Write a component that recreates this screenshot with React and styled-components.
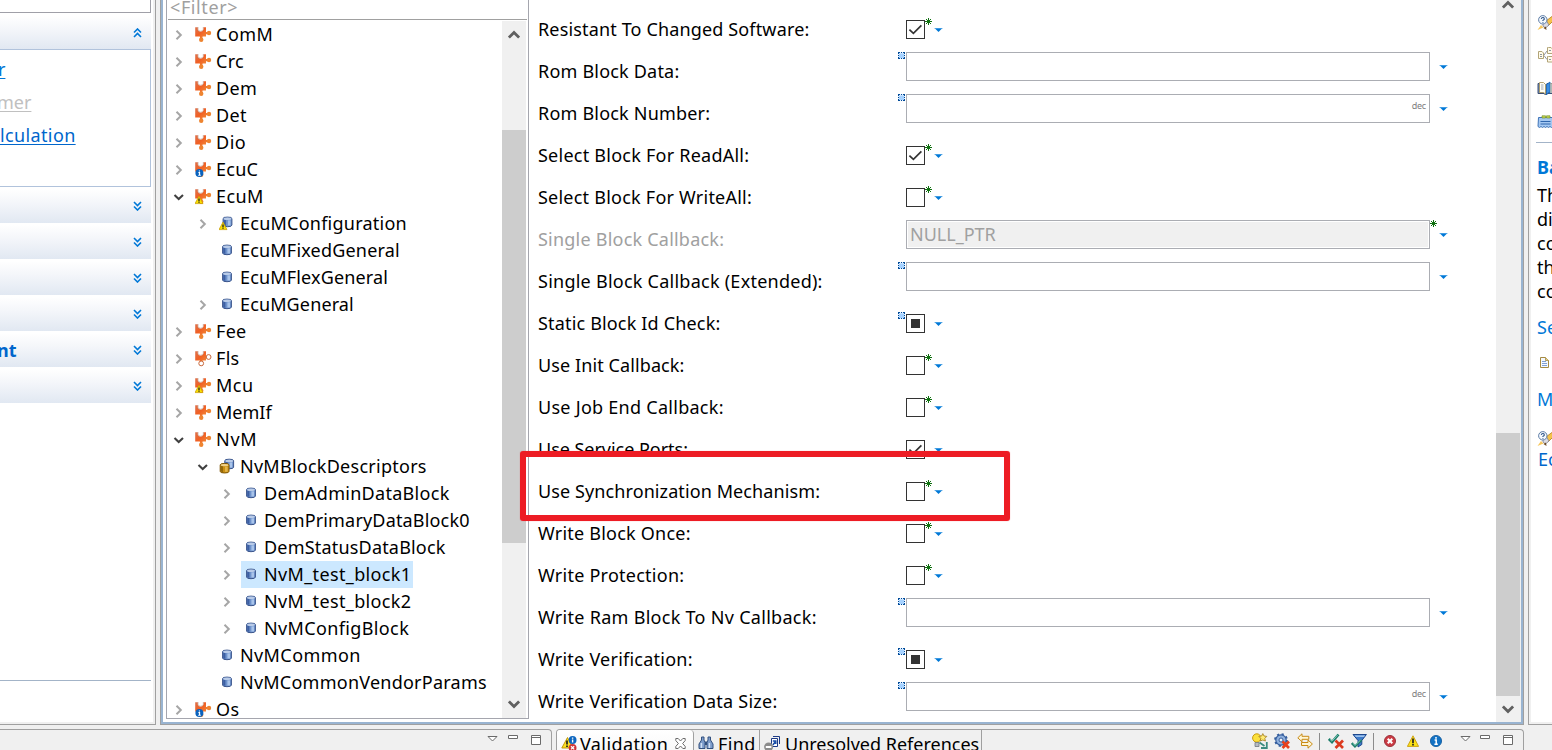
import React from "react";
import styled, { createGlobalStyle, css } from "styled-components";

const Global = createGlobalStyle`
  * { box-sizing: border-box; }
  body {
    margin: 0;
    background: #f0f0f0;
    color: #000;
    font: 18px/27px "Noto Sans", "Open Sans", sans-serif;
    overflow: hidden;
  }
  svg { display: block; flex: none; }
`;

/* ---------- shell ---------- */

const Window = styled.div`
  width: 1552px;
  height: 750px;
  overflow: hidden;
  display: flex;
  flex-direction: column;
  gap: 4px;
`;

const Workbench = styled.div`
  height: 725px;
  display: flex;
`;

const Text = styled.span`
  white-space: pre;
  letter-spacing: ${(p) => p.$track || 0}px;
`;

/* ---------- task pane on the left ---------- */

const TaskPane = styled.div`
  width: 156px;
  height: 725px;
  margin-right: 4px;
  border-right: 1px solid #a0a0a0;
  border-bottom: 1px solid #a0a0a0;
  padding: 0 2px 2px 0;
`;

const TaskBody = styled.div`
  height: 100%;
  background: #fff;
  padding-right: 2px;
`;

const TaskTop = styled.div`
  height: 13px;
  border: solid #a0a0a8;
  border-width: 0 1px 1px 0;
  margin-bottom: 3px;
`;

const SectionHead = styled.div`
  height: ${(p) => (p.$open ? 33 : 34)}px;
  margin-bottom: ${(p) => (p.$open ? 0 : 2)}px;
  background: linear-gradient(#fff, #f4f6fa 40%, #e1e8f2);
  display: flex;
  align-items: center;
  justify-content: space-between;
  padding-right: 9px;
  font-weight: 700;
  color: #0066cc;
  > span { margin-left: -3px; }
`;

const SectionBox = styled.div`
  height: 138px;
  margin-bottom: 2px;
  border: solid #b1c3dc;
  border-width: 1px 1px 1px 0;
  padding-top: 3px;
  display: flex;
  flex-direction: column;
`;

const TaskLink = styled.span`
  height: 33px;
  line-height: 33px;
  align-self: flex-start;
  white-space: pre;
  margin-left: ${(p) => p.$shift || 0}px;
  letter-spacing: ${(p) => p.$track || 0}px;
  color: ${(p) => (p.$off ? "#c0c0c0" : p.$hot ? "#0078d7" : "#0066cc")};
  text-decoration: underline;
  text-decoration-thickness: 1px;
  text-underline-offset: 2px;
`;

const TaskRule = styled.div`
  height: 1px;
  margin-top: 277px;
  background: #a3b4c8;
`;

/* ---------- editor ---------- */

const Editor = styled.div`
  width: 1364px;
  height: 725px;
  border: solid #a0a0a0;
  border-width: 0 1px 1px 1px;
  display: flex;
`;

const EditorInner = styled.div`
  flex: 1;
  border: solid #99b4d1;
  border-width: 0 2px 2px 2px;
  background: #fff;
  padding-left: 3px;
  display: flex;
`;

const TreePane = styled.div`
  width: 363px;
  height: 719px;
  border: solid #a5a6ae;
  border-width: 0 1px 1px 1px;
  display: flex;
  flex-direction: column;
`;

const Filter = styled.div`
  height: 20px;
  margin: 0 1px 1px;
  border-bottom: 1px solid #a0a0a0;
  color: #a0a0a0;
  padding-left: 2px;
  display: flex;
  align-items: flex-end;
  line-height: 24px;
  overflow: hidden;
`;

const TreeBody = styled.div`
  flex: 1;
  min-height: 0;
  display: flex;
  justify-content: space-between;
  padding-right: 2px;
`;

const TreeRows = styled.div`
  overflow: hidden;
  flex: 1;
`;

const TreeRow = styled.div`
  height: 27px;
  padding-left: ${(p) => 4 + p.$depth * 24}px;
  display: flex;
  align-items: center;
`;

const Twisty = styled.div`
  width: 16px;
  height: 16px;
  margin-right: 6px;
  flex: none;
`;

const TreeItem = styled.div`
  height: 27px;
  display: flex;
  align-items: center;
  gap: 4px;
  padding: 0 2px 0 2px;
  background: ${(p) => (p.$selected ? "#cce8ff" : "transparent")};
`;

const ScrollTrack = styled.div`
  width: ${(p) => p.$w}px;
  background: #f0f0f0;
  display: flex;
  flex-direction: column;
  align-items: center;
  justify-content: space-between;
  padding: ${(p) => p.$pad};
  flex: none;
`;

const ScrollThumb = styled.div`
  align-self: stretch;
  height: ${(p) => p.$h}px;
  margin: ${(p) => p.$m};
  background: #cdcdcd;
`;

const FormPane = styled.div`
  flex: 1;
  padding: 9px 0 0 9px;
  height: 722px;
  overflow: hidden;
`;

const FormRow = styled.div`
  height: 42px;
  display: flex;
  align-items: flex-start;
`;

const FormLabel = styled.div`
  width: 368px;
  line-height: 40px;
  white-space: pre;
  letter-spacing: ${(p) => p.$track || 0}px;
  color: ${(p) => (p.$off ? "#a0a0a0" : "#000")};
`;

const FieldSlot = styled.div`
  position: relative;
  margin-top: ${(p) => (p.$check ? 11 : 1)}px;
  display: flex;
  align-items: flex-start;
`;

const CheckBox = styled.div`
  width: 19px;
  height: 19px;
  border: 1px solid #333;
  background: #fff;
  display: flex;
  align-items: center;
  justify-content: center;
`;

const Mixed = styled.div`
  width: 9px;
  height: 9px;
  background: #333;
`;

const Input = styled.div`
  width: 524px;
  height: 29px;
  border: 1px solid #abadb3;
  background: ${(p) => (p.$off ? "#f0f0f0" : "#fff")};
  ${(p) => p.$off && css`box-shadow: inset 0 0 0 1px #fff;`}
  color: #a0a0a0;
  padding: 0 3px;
  display: flex;
  justify-content: ${(p) => (p.$unit ? "flex-end" : "flex-start")};
`;

const Unit = styled.span`
  font-size: 9px;
  line-height: 22px;
  letter-spacing: -0.2px;
  color: #7d7d7d;
`;

const Menu = styled.div`
  margin: ${(p) => (p.$check ? "8px 0 0 9px" : "13px 0 0 9px")};
`;

const SetMark = styled.div`
  position: absolute;
  left: -8px;
  top: ${(p) => (p.$check ? -2 : 0)}px;
`;

const StarMark = styled.div`
  position: absolute;
  left: ${(p) => (p.$check ? 19 : 524)}px;
  top: ${(p) => (p.$check ? -2 : 0)}px;
`;

const Highlight = styled.div`
  position: absolute;
  left: 520px;
  top: 451px;
  width: 490px;
  height: 70px;
  border: 6px solid #ed1c24;
  border-radius: 3px;
  box-shadow: 0 0 1px rgba(237, 28, 36, 0.6);
`;

/* ---------- help pane on the right ---------- */

const HelpPane = styled.div`
  width: 24px;
  margin-left: 4px;
  border-left: 1px solid #a0a0a0;
  border-bottom: 1px solid #a0a0a0;
  padding-left: 2px;
  overflow: hidden;
`;

const HelpBody = styled.div`
  height: 722px;
  background: #fff;
  padding: 15px 0 0 6px;
  white-space: pre;
  line-height: 24px;
`;

const HelpIcon = styled.div`
  height: ${(p) => p.$h}px;
  padding-left: ${(p) => p.$pl || 0}px;
`;

const HelpRule = styled.div`
  height: 1px;
  margin: 0 0 11px -1px;
  background: #a3b4c8;
`;

const HelpTitle = styled.div`
  font-weight: 700;
  color: #0078d7;
  line-height: 26px;
  margin-bottom: 3px;
`;

const HelpLink = styled.div`
  color: ${(p) => (p.$dark ? "#0066cc" : "#0078d7")};
  padding-left: ${(p) => (p.$dark ? 1 : 0)}px;
  margin: ${(p) => p.$m};
`;

/* ---------- bottom views ---------- */

const BottomBar = styled.div`
  height: 21px;
  display: flex;
  gap: 4px;
`;

const View = styled.div`
  width: ${(p) => p.$w}px;
  border: 1px solid #a0a0a0;
  border-width: ${(p) => (p.$first ? "1px 1px 0 0" : "1px 1px 0 1px")};
  border-radius: ${(p) => (p.$first ? "0 4px 0 0" : "4px 4px 0 0")};
  display: flex;
  justify-content: ${(p) => (p.$first ? "flex-end" : "space-between")};
  overflow: hidden;
`;

const Tabs = styled.div`
  display: flex;
`;

const Tab = styled.div`
  height: 27px;
  width: ${(p) => p.$w}px;
  padding: 0 0 0 4px;
  border-right: 1px solid #a0a0a0;
  border-top-right-radius: ${(p) => (p.$active ? 4 : 0)}px;
  background: ${(p) => (p.$active ? "linear-gradient(#fff, #f6f6f6)" : "transparent")};
  display: flex;
  align-items: flex-start;
  gap: ${(p) => (p.$active ? 3 : 4)}px;
  > svg { margin-top: 6px; }
  > span { line-height: 28px; }
`;

const Tools = styled.div`
  display: flex;
  align-items: flex-start;
  padding: 3px 10px 0 0;
`;

const Tool = styled.div`
  margin-left: ${(p) => p.$ml || 0}px;
  margin-top: ${(p) => p.$mt || 0}px;
`;

const ToolRule = styled.div`
  width: 1px;
  height: 20px;
  margin: 0 0 0 ${(p) => p.$ml}px;
  background: #8c8c8c;
`;

const ViewTools = styled.div`
  display: flex;
  align-items: flex-start;
  padding: 5px ${(p) => p.$pr}px 0 0;
`;

/* ---------- drawings ---------- */

const SectionChevron = ({ up }) => (
  <svg width="9" height="10" viewBox="0 0 9 10" fill="none" stroke="#0078d7" strokeWidth="1.6">
    {up ? <path d="M1 4.5 4.5 1 8 4.5M1 9 4.5 5.5 8 9" /> : <path d="M1 1 4.5 4.5 8 1M1 5.5 4.5 9 8 5.5" />}
  </svg>
);

const TwistyIcon = ({ open }) => (
  <svg width="16" height="16" viewBox="0 0 16 16" fill="none">
    {open ? (
      <path d="M3.5 6 7.7 10 12 6" stroke="#404040" strokeWidth="2.1" />
    ) : (
      <path d="M5.5 3.8 9.8 8 5.5 12.2" stroke="#a6a6a6" strokeWidth="2" />
    )}
  </svg>
);

const ScrollChevron = ({ up }) => (
  <svg width="12" height="9" viewBox="0 0 12 9" fill="none" stroke="#606060" strokeWidth="2.8">
    <path d={up ? "M.9 7.6 6 2.4 11.1 7.6" : "M.9 1.4 6 6.6 11.1 1.4"} />
  </svg>
);

const WarnBadge = ({ x, y }) => (
  <g transform={`translate(${x} ${y})`}>
    <path d="M4 .5 8 8H0Z" fill="#fae000" stroke="#c79a00" strokeWidth=".7" />
    <path d="M4 2.8V5.4M4 6V7.2" stroke="#222" strokeWidth="1.3" />
  </g>
);

const InfoBadge = ({ x, y }) => (
  <g transform={`translate(${x} ${y})`}>
    <circle cx="4" cy="4" r="4" fill="#0a62bd" />
    <path d="M4 1.4V2.6M3 3.6H4.2V6.2M2.8 6.3H5.4" stroke="#fff" strokeWidth="1.1" fill="none" />
  </g>
);

const ModuleIcon = ({ badge, hollow }) => (
  <svg width="17" height="17" viewBox="0 0 17 17">
    <defs>
      <linearGradient id="mod" x1="0" y1="0" x2="1" y2="1">
        <stop offset="0" stopColor="#dd7450" />
        <stop offset=".45" stopColor="#f05f24" />
        <stop offset="1" stopColor="#f3923a" />
      </linearGradient>
    </defs>
    <path
      d="M.2 1.3H3V3.6Q3.2 5.6 5.6 5.6T8.3 3.6V1.3H11V6H12.6V8.2H11V10.6H7.6L7.3 12.6H5.2L4.8 10.6H.2Z"
      fill="url(#mod)"
    />
    <path d="M3 1V3.4Q3.2 5.2 5.6 5.2T8.3 3.4V1" fill="none" stroke="#c9b0a4" strokeWidth=".8" />
    {hollow ? (
      <g fill="#fff" stroke="#c8683c" strokeWidth="1">
        <circle cx="13.6" cy="7" r="2.4" />
        <circle cx="6.2" cy="13.4" r="2.4" />
      </g>
    ) : (
      <g fill="#ee8430">
        <circle cx="14" cy="7" r="2.2" />
        <circle cx="6.2" cy="13.8" r="2.2" />
      </g>
    )}
    {badge === "warn" && <WarnBadge x={0} y={7.6} />}
    {badge === "info" && <InfoBadge x={0.4} y={8} />}
  </svg>
);

const Can = ({ x, y, gold }) => (
  <g transform={`translate(${x} ${y})`}>
    <path
      d="M.6 2Q.6 .6 5 .6T9.4 2V8.6Q9.4 10.2 5 10.2T.6 8.6Z"
      fill={gold ? "#c98f12" : "#6f93cc"}
      stroke={gold ? "#7d5608" : "#3c568c"}
      strokeWidth="1"
    />
    <path d="M1.2 3V8.8L3.4 9.5V3.5Z" fill={gold ? "#94680a" : "#3d5fa3"} />
    <path d="M5.4 3.8H8V9H5.4Z" fill={gold ? "#e3b54a" : "#a9c4ea"} />
    <ellipse cx="5" cy="2.3" rx="3.9" ry="1.2" fill={gold ? "#efd08a" : "#b9cbe8"} />
  </g>
);

const BlockIcon = ({ badge }) => (
  <svg width="17" height="17" viewBox="0 0 17 17">
    <Can x={badge ? 3.5 : 3} y={badge ? 1.5 : 2.5} />
    {badge === "warn" && <WarnBadge x={0} y={6.6} />}
  </svg>
);

const BlocksIcon = () => (
  <svg width="17" height="17" viewBox="0 0 17 17">
    <Can x={5.2} y={0.6} />
    <Can x={0.6} y={4.8} gold />
  </svg>
);

const MenuArrow = () => (
  <svg width="9" height="4" viewBox="0 0 9 4">
    <path d="M0 0H9L8 1H1Z" fill="#7cbcec" />
    <path d="M1 .5H8L4.5 4Z" fill="#0078d7" />
  </svg>
);

const CheckMark = () => (
  <svg width="15" height="13" viewBox="0 0 15 13" fill="none" stroke="#333" strokeWidth="1.7">
    <path d="M1.4 6.6 5.4 10.4 13.4 2.4" />
  </svg>
);

const SetIcon = () => (
  <svg width="7" height="7" viewBox="0 0 7 7">
    <path d="M0 0H7V7H0Z" fill="#e6f2ff" />
    <path d="M1 1.5H6V6H1Z" fill="#a6d2ff" />
    <path
      d="M0 0H2V1H1V2H0ZM3 0H4V1H3ZM5 0H7V2H6V1H5ZM0 3H1V4H0ZM6 3H7V4H6ZM0 5H1V6H2V7H0ZM3 6H4V7H3ZM6 5H7V7H5V6H6Z"
      fill="#004a98"
    />
  </svg>
);

const StarIcon = () => (
  <svg width="7" height="7" viewBox="0 0 7 7" stroke="#107010" strokeWidth="1">
    <path d="M3.5 0V7M0 3.5H7M1 1 6 6M6 1 1 6" />
  </svg>
);

const RocketIcon = () => (
  <svg width="17" height="16" viewBox="0 0 17 16">
    <path d="M9 6 15.5 1H17V5L11 11Z" fill="#f6c24a" stroke="#b07a1c" strokeWidth=".8" />
    <path d="M6 8 9.5 6 12 10 8.5 13 6 11Z" fill="#dcdce4" stroke="#8a8a96" strokeWidth=".9" />
    <path d="M.5 15 4 10 6.5 12.5Z" fill="#f7c75c" />
    <path d="M6.5 13 9 11.5 9.5 15Z" fill="#6d4a22" />
    <circle cx="5.8" cy="4.8" r="4.2" fill="#f4f8fd" stroke="#5c7ca6" />
    <path d="M4.3 3.8Q4.5 2.4 6 2.5T7.2 4.4L5.9 5.4V6M5.9 6.9V7.8" fill="none" stroke="#2d5488" strokeWidth="1.1" />
  </svg>
);

const HierarchyIcon = () => (
  <svg width="17" height="16" viewBox="0 0 17 16" fill="#fffbe9" stroke="#b2a478" strokeWidth="1">
    <path d="M1.5 4.5H5L6.5 6V11.5H1.5ZM11.5 .5H14L15.5 2V6.5H10.5V.5ZM11.5 9.5H15.5V15H10.5V9.5Z" />
    <path d="M7 8 10 4M7 8.5 10 12.5M3 7.5H5M3 9.5H5M12 3.5H14M12 12.5H14" fill="none" stroke="#8f95a0" />
  </svg>
);

const BookIcon = () => (
  <svg width="17" height="16" viewBox="0 0 17 16">
    <path d="M1 2.5H7L8.5 4 10 2.5H16.5V12.5H10L8.5 14 7 12.5H1Z" fill="#6f8fb8" stroke="#3c4f74" />
    <path d="M2.5 1.5H6.5L8.5 3.5V13L6.5 11.5H2.5Z" fill="#fffdf3" stroke="#a99864" strokeWidth=".9" />
    <path d="M4 4H6.5M4 6H6.5M4 8H6.5" stroke="#9ca8ba" />
    <path d="M9.5 3.5 13 1V12L11.5 11.5 9.5 14Z" fill="#3b8de2" stroke="#1c62b0" strokeWidth=".8" />
    <path d="M14 2V12" stroke="#f4e7b8" />
  </svg>
);

const NotesIcon = () => (
  <svg width="17" height="14" viewBox="0 0 17 14">
    <path d="M1.5 2.5H16V11L14.5 12.5 13 11.5 11.5 12.5 10 11.5 8.5 12.5 7 11.5 5.5 12.5 4 11.5 2.5 12.5 1 11.5Z" fill="#a4c8f2" stroke="#3f74b8" strokeWidth="1" />
    <path d="M5 .8H8.5V3H5ZM9.5 .8H13V3H9.5Z" fill="#c6d844" stroke="#77913a" strokeWidth=".7" />
    <path d="M3.5 6.5H13.5M3.5 9H13.5" stroke="#2f66ad" />
  </svg>
);

const DocIcon = () => (
  <svg width="9" height="11" viewBox="0 0 9 11">
    <path d="M.5 .5H5.5L8.5 3.5V10.5H.5Z" fill="#f4f8ff" stroke="#a58a43" />
    <path d="M5.5 .5V3.5H8.5" fill="#e3cc86" stroke="#a58a43" strokeWidth=".8" />
    <path d="M2 4.5H6M2 6.5H7M2 8.5H7" stroke="#7f9fd2" />
  </svg>
);

const TriangleIcon = () => (
  <svg width="11" height="6" viewBox="0 0 11 6">
    <path d="M1 .5H10L5.5 5Z" fill="#fff" stroke="#6a6a6a" />
  </svg>
);

const MinIcon = () => (
  <svg width="10" height="4" viewBox="0 0 10 4">
    <path d="M.5 .5H9.5V3.5H.5Z" fill="#fff" stroke="#6a6a6a" />
  </svg>
);

const MaxIcon = () => (
  <svg width="10" height="10" viewBox="0 0 10 10">
    <path d="M.5 .5H9.5V9.5H.5ZM.5 2.5H9.5" fill="#fff" stroke="#6a6a6a" />
  </svg>
);

const ProblemsIcon = () => (
  <svg width="16" height="16" viewBox="0 0 16 16">
    <path d="M6.5 1.5 12 12H.8Z" fill="#fbdf22" stroke="#b98c00" strokeWidth=".9" />
    <path d="M6 4.5V8.5M6 9.5V11" stroke="#1d1d1d" strokeWidth="1.7" />
    <circle cx="11.6" cy="4" r="3.9" fill="#0d66bf" />
    <path d="M11.6 1.6V2.8M11.6 3.6V6.4" stroke="#fff" strokeWidth="1.4" />
    <circle cx="11.6" cy="11.8" r="3.9" fill="#cf3338" />
    <path d="M10 10.2 13.2 13.4M13.2 10.2 10 13.4" stroke="#fff" strokeWidth="1.3" />
  </svg>
);

const CloseIcon = () => (
  <svg width="11" height="11" viewBox="0 0 11 11">
    <path
      d="M.8 .5H3.2L5.5 3 7.8 .5H10.2V2.6L7.6 5.5 10.2 8.4V10.5H7.8L5.5 8 3.2 10.5H.8V8.4L3.4 5.5 .8 2.6Z"
      fill="#fff"
      stroke="#6c6c6c"
    />
  </svg>
);

const BinocularsIcon = () => (
  <svg width="16" height="15" viewBox="0 0 16 15">
    <path d="M3.5 1H6V4L7 6.5V12.5H1V8L3.5 4Z" fill="#7d9ccb" stroke="#33507f" />
    <path d="M10 1H12.5V4L15 8V12.5H9V6.5L10 4Z" fill="#7d9ccb" stroke="#33507f" />
    <path d="M7 5.5H9V9H7Z" fill="#33507f" />
    <path d="M3.4 7V12M11.4 7V12" stroke="#d2e0f4" strokeWidth="1.5" />
  </svg>
);

const ReferencesIcon = () => (
  <svg width="17" height="16" viewBox="0 0 17 16">
    <path d="M9 .5H15.5V8" fill="none" stroke="#1d3a86" />
    <path d="M7.5 2.5H13.5V10.5H7.5Z" fill="#fff" stroke="#1d3a86" />
    <path d="M8.8 9 11.5 5.5M8.8 5H11.8V8" fill="none" stroke="#1b4fa8" strokeWidth="1.5" />
    <circle cx="4.6" cy="11" r="4.5" fill="#8d8d8d" />
    <path d="M1.8 11H7.4" stroke="#fff" strokeWidth="1.8" />
  </svg>
);

const BulbIcon = () => (
  <svg width="16" height="16" viewBox="0 0 16 16">
    <circle cx="4.8" cy="5" r="4.2" fill="#fbe03c" stroke="#c89a10" />
    <path d="M3 9.5H7V13.5H3Z" fill="#b5bac2" stroke="#717780" strokeWidth=".8" />
    <path d="M10.8 .6 12 3 14.8 3.4 12.8 5.4 13.4 8 10.8 7 8.2 8 8.8 5.4 6.8 3.4 9.6 3Z" fill="#ffea72" stroke="#a8842a" strokeWidth=".9" />
    <path d="M7.5 9.5 12.5 13M14.8 9V15H9" fill="none" stroke="#3c8c80" strokeWidth="1.8" />
  </svg>
);

const GearIcon = () => (
  <svg width="16" height="16" viewBox="0 0 16 16">
    <circle cx="7" cy="7" r="5.2" fill="#8fb0dd" stroke="#345d9d" strokeWidth="1.2" />
    <circle cx="7" cy="7" r="6" fill="none" stroke="#345d9d" strokeWidth="1.8" strokeDasharray="2.2 2.5" />
    <circle cx="7" cy="7" r="2" fill="#f0f5fc" stroke="#345d9d" />
    <path d="M8.5 8.5 15 15M15 8.5 8.5 15" stroke="#e8401c" strokeWidth="2.7" />
  </svg>
);

const SwapIcon = () => (
  <svg width="16" height="16" viewBox="0 0 16 16" fill="#fff6d4" stroke="#c88a14" strokeWidth="1">
    <path d="M.8 4.8 5 .8V3.3H11.8V6.3H5V8.8Z" />
    <path d="M15.4 11 11 7V9.5H4.5V12.5H11V15.2Z" />
  </svg>
);

const CheckCrossIcon = () => (
  <svg width="16" height="16" viewBox="0 0 16 16" fill="none">
    <path d="M.8 6 4 9.2 10.5 1.5" stroke="#1b7c69" strokeWidth="2.6" />
    <path d="M2 6.4 4 8.2 9.8 1.8" stroke="#9fe0cf" strokeWidth=".8" />
    <path d="M7.5 7.5 15 15M15 7.5 7.5 15" stroke="#db3a1e" strokeWidth="2.7" />
  </svg>
);

const FilterIcon = () => (
  <svg width="16" height="16" viewBox="0 0 16 16">
    <path d="M2 1.5H15.4L10.8 7.5V11.5L7 14V7.5Z" fill="#3d7bca" stroke="#1d478c" />
    <path d="M3.5 2.4H14L13 3.8H4.8Z" fill="#bcd8f8" />
    <path d="M.8 10 4 13.4 10.5 7" fill="none" stroke="#1b7c69" strokeWidth="2.4" />
    <path d="M1.6 10 4 12.4 9.6 7" fill="none" stroke="#a9e8d6" strokeWidth=".8" />
  </svg>
);

const ErrorIcon = () => (
  <svg width="12" height="12" viewBox="0 0 12 12">
    <circle cx="6" cy="6" r="5.5" fill="#cc3b44" stroke="#99313a" />
    <path d="M3.7 3.7 8.3 8.3M8.3 3.7 3.7 8.3" stroke="#fff" strokeWidth="2" />
  </svg>
);

const WarningIcon = () => (
  <svg width="12" height="12" viewBox="0 0 12 12">
    <path d="M6 .8 11.6 11.4H.4Z" fill="#fbe116" stroke="#c99c0c" strokeWidth=".9" />
    <path d="M6 3.6V8M6 8.8V10.4" stroke="#222" strokeWidth="1.7" />
  </svg>
);

const InfoIcon = () => (
  <svg width="12" height="12" viewBox="0 0 12 12">
    <circle cx="6" cy="6" r="5.6" fill="#1272c4" stroke="#0c5599" strokeWidth=".8" />
    <path d="M6 2V3.8M4.6 5H6.2V9M4.4 9.2H7.8" fill="none" stroke="#fff" strokeWidth="1.5" />
  </svg>
);

/* ---------- data ---------- */

const tree = [
  { t: "ComM", d: 0, k: "mod", track: 0.5 },
  { t: "Crc", d: 0, k: "mod", track: 0.3 },
  { t: "Dem", d: 0, k: "mod", track: 0.3 },
  { t: "Det", d: 0, k: "mod", track: 0.3 },
  { t: "Dio", d: 0, k: "mod", track: 0.5 },
  { t: "EcuC", d: 0, k: "mod", badge: "info", track: 0.25 },
  { t: "EcuM", d: 0, k: "mod", badge: "warn", open: true, track: 0.4 },
  { t: "EcuMConfiguration", d: 1, k: "block", badge: "warn", track: 0.24 },
  { t: "EcuMFixedGeneral", d: 1, k: "block", leaf: true, track: 0.19 },
  { t: "EcuMFlexGeneral", d: 1, k: "block", leaf: true, track: 0.16 },
  { t: "EcuMGeneral", d: 1, k: "block", track: 0.13 },
  { t: "Fee", d: 0, k: "mod", track: 0.3 },
  { t: "Fls", d: 0, k: "mod", hollow: true, track: 0.3 },
  { t: "Mcu", d: 0, k: "mod", badge: "warn", track: 0.5 },
  { t: "MemIf", d: 0, k: "mod" },
  { t: "NvM", d: 0, k: "mod", open: true, track: 0.7 },
  { t: "NvMBlockDescriptors", d: 1, k: "blocks", open: true, track: 0.26 },
  { t: "DemAdminDataBlock", d: 2, k: "block", track: 0.29 },
  { t: "DemPrimaryDataBlock0", d: 2, k: "block", track: 0.17 },
  { t: "DemStatusDataBlock", d: 2, k: "block", track: 0.19 },
  { t: "NvM_test_block1", d: 2, k: "block", selected: true, track: 0.36 },
  { t: "NvM_test_block2", d: 2, k: "block", track: 0.36 },
  { t: "NvMConfigBlock", d: 2, k: "block", track: 0.37 },
  { t: "NvMCommon", d: 1, k: "block", leaf: true, track: 0.4 },
  { t: "NvMCommonVendorParams", d: 1, k: "block", leaf: true, track: 0.24 },
  { t: "Os", d: 0, k: "mod", badge: "info", track: 0.5 },
];

const fields = [
  { t: "Resistant To Changed Software:", check: "on", star: true, track: 0.15 },
  { t: "Rom Block Data:", set: true, track: 0.2 },
  { t: "Rom Block Number:", set: true, unit: "dec", track: 0.2 },
  { t: "Select Block For ReadAll:", check: "on", star: true, track: 0.24 },
  { t: "Select Block For WriteAll:", check: "off", star: true, track: 0.23 },
  { t: "Single Block Callback:", off: true, value: "NULL_PTR", star: true, track: 0.22 },
  { t: "Single Block Callback (Extended):", set: true, track: 0.25 },
  { t: "Static Block Id Check:", check: "mixed", set: true, track: 0.17 },
  { t: "Use Init Callback:", check: "off", star: true, track: 0.1 },
  { t: "Use Job End Callback:", check: "off", star: true, track: 0.27 },
  { t: "Use Service Ports:", check: "on", track: -0.03 },
  { t: "Use Synchronization Mechanism:", check: "off", star: true, track: 0.1 },
  { t: "Write Block Once:", check: "off", star: true, track: 0.22 },
  { t: "Write Protection:", check: "off", star: true, track: 0.25 },
  { t: "Write Ram Block To Nv Callback:", set: true, track: 0.29 },
  { t: "Write Verification:", check: "mixed", set: true, track: 0.24 },
  { t: "Write Verification Data Size:", set: true, unit: "dec", track: 0.24 },
];

const NodeIcon = ({ node }) => {
  if (node.k === "mod") return <ModuleIcon badge={node.badge} hollow={node.hollow} />;
  if (node.k === "blocks") return <BlocksIcon />;
  return <BlockIcon badge={node.badge} />;
};

const Field = ({ f }) => (
  <FormRow>
    <FormLabel $off={f.off} $track={f.track}>{f.t}</FormLabel>
    <FieldSlot $check={!!f.check}>
      {f.check ? (
        <CheckBox>
          {f.check === "on" && <CheckMark />}
          {f.check === "mixed" && <Mixed />}
        </CheckBox>
      ) : (
        <Input $off={f.off} $unit={!!f.unit}>
          {f.value}
          {f.unit && <Unit>{f.unit}</Unit>}
        </Input>
      )}
      {f.set && <SetMark $check={!!f.check}><SetIcon /></SetMark>}
      {f.star && <StarMark $check={!!f.check}><StarIcon /></StarMark>}
      <Menu $check={!!f.check}><MenuArrow /></Menu>
    </FieldSlot>
  </FormRow>
);

const sections = ["", "", "", "", "nt", ""];

export default function App() {
  return (
    <Window>
      <Global />
      <Workbench>
        <TaskPane>
          <TaskBody>
            <TaskTop />
            <SectionHead $open><span /><SectionChevron up /></SectionHead>
            <SectionBox>
              <TaskLink $hot $shift={-2}>r</TaskLink>
              <TaskLink $off $shift={-3}>mer</TaskLink>
              <TaskLink $track={0.37}>lculation</TaskLink>
            </SectionBox>
            {sections.map((s, i) => (
              <SectionHead key={i}><span>{s}</span><SectionChevron /></SectionHead>
            ))}
            <TaskRule />
          </TaskBody>
        </TaskPane>

        <Editor>
          <EditorInner>
            <TreePane>
              <Filter><Text $track={0.6}>&lt;Filter&gt;</Text></Filter>
              <TreeBody>
                <TreeRows>
                  {tree.map((n) => (
                    <TreeRow key={n.t} $depth={n.d}>
                      <Twisty>{!n.leaf && <TwistyIcon open={n.open} />}</Twisty>
                      <TreeItem $selected={n.selected}>
                        <NodeIcon node={n} />
                        <Text $track={n.track}>{n.t}</Text>
                      </TreeItem>
                    </TreeRow>
                  ))}
                </TreeRows>
                <ScrollTrack $w={24} $pad="9px 0 9px">
                  <ScrollChevron up />
                  <ScrollThumb $h={413} $m="0 0 67px" />
                  <ScrollChevron />
                </ScrollTrack>
              </TreeBody>
            </TreePane>
            <FormPane>
              {fields.map((f) => <Field key={f.t} f={f} />)}
            </FormPane>
            <ScrollTrack $w={25} $pad="0 1px 8px 0">
              <ScrollChevron up />
              <ScrollThumb $h={263} $m="415px 0 0" />
              <ScrollChevron />
            </ScrollTrack>
          </EditorInner>
        </Editor>

        <HelpPane>
          <HelpBody>
            <HelpIcon $h={32}><RocketIcon /></HelpIcon>
            <HelpIcon $h={34}><HierarchyIcon /></HelpIcon>
            <HelpIcon $h={34}><BookIcon /></HelpIcon>
            <HelpIcon $h={27}><NotesIcon /></HelpIcon>
            <HelpRule />
            <HelpTitle>Ba</HelpTitle>
            <div>Th</div>
            <div>di</div>
            <div>co</div>
            <div>th</div>
            <div>co</div>
            <HelpLink $m="12px 0 18px">Se</HelpLink>
            <HelpIcon $h={30} $pl={3}><DocIcon /></HelpIcon>
            <HelpLink $m="0 0 20px">M</HelpLink>
            <HelpIcon $h={16}><RocketIcon /></HelpIcon>
            <HelpLink $dark $m="0">Ec</HelpLink>
          </HelpBody>
        </HelpPane>
      </Workbench>

      <BottomBar>
        <View $w={552} $first>
          <ViewTools $pr={10}>
            <Tool $mt={1}><TriangleIcon /></Tool>
            <Tool $ml={10}><MinIcon /></Tool>
            <Tool $ml={13}><MaxIcon /></Tool>
          </ViewTools>
        </View>
        <View $w={968}>
          <Tabs>
            <Tab $w={137} $active>
              <ProblemsIcon />
              <Text $track={0.4}>Validation</Text>
              <Tool $mt={8} $ml={4}><CloseIcon /></Tool>
            </Tab>
            <Tab $w={66}><BinocularsIcon /><Text $track={0.4}>Find</Text></Tab>
            <Tab $w={222}><ReferencesIcon /><Text>Unresolved References</Text></Tab>
          </Tabs>
          <Tools>
            <Tool><BulbIcon /></Tool>
            <Tool $ml={6}><GearIcon /></Tool>
            <Tool $ml={7}><SwapIcon /></Tool>
            <ToolRule $ml={6} />
            <Tool $ml={8}><CheckCrossIcon /></Tool>
            <Tool $ml={7}><FilterIcon /></Tool>
            <ToolRule $ml={6} />
            <Tool $ml={10} $mt={2}><ErrorIcon /></Tool>
            <Tool $ml={11} $mt={2}><WarningIcon /></Tool>
            <Tool $ml={11} $mt={2}><InfoIcon /></Tool>
            <Tool $ml={18} $mt={3}><TriangleIcon /></Tool>
            <Tool $ml={9} $mt={2}><MinIcon /></Tool>
            <Tool $ml={13} $mt={2}><MaxIcon /></Tool>
          </Tools>
        </View>
      </BottomBar>
      <Highlight />
    </Window>
  );
}
